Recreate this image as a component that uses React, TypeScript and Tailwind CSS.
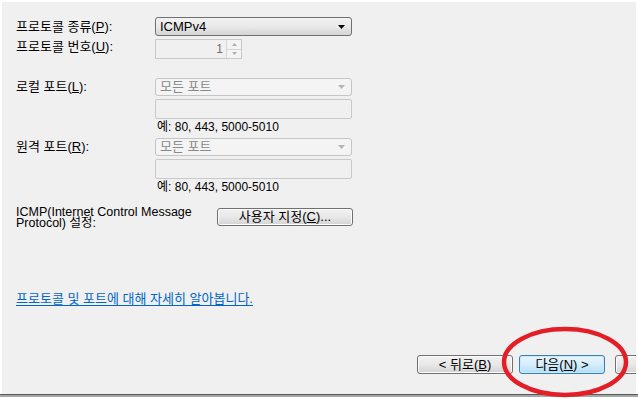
import React from 'react';

const Acc = ({ c }: { c: string }) => <span className="underline underline-offset-1">{c}</span>;

const Arrow = ({ disabled }: { disabled?: boolean }) => (
  <svg width="7" height="4" viewBox="0 0 7 4" className="shrink-0">
    <path d="M0 0h7L3.5 4z" fill={disabled ? '#b5b5b5' : '#000'} />
  </svg>
);

const Combo = ({ text, disabled, h }: { text: string; disabled?: boolean; h: string }) => (
  <div
    className={`w-[197px] ${h} flex items-center justify-between pl-[4px] pr-[6px] rounded-[3px] border ${
      disabled
        ? 'border-[#c5c5c5] bg-[#f4f4f4] text-[#8a8a8a] text-[13px]'
        : 'border-[#707070] bg-gradient-to-b from-[#f2f2f2] via-[#e9e9e9] to-[#d4d4d4] text-black text-[13px]'
    }`}
  >
    <span className="leading-[16px]">{text}</span>
    <Arrow disabled={disabled} />
  </div>
);

const TextBox = () => (
  <div className="w-[197px] h-[20px] mt-[3px] rounded-[2px] border border-[#c9c9c9] bg-[#f0f0f0]" />
);

const Example = () => (
  <div className="h-[19px] pl-[2px] pt-[1px] leading-[14px] text-[12px] text-black">예: 80, 443, 5000-5010</div>
);

const WinButton = ({
  children,
  w,
  h = 'h-[19px]',
  focused,
}: {
  children?: React.ReactNode;
  w: string;
  h?: string;
  focused?: boolean;
}) => (
  <div
    className={`${w} ${h} shrink-0 flex items-center justify-center rounded-[3px] border leading-[16px] ${
      focused
        ? 'border-[#3c7fb1] bg-gradient-to-b from-[#eaf6fd] via-[#d4eefc] to-[#b3ddf5] shadow-[inset_0_0_0_1px_#c8e9fb]'
        : 'border-[#707070] bg-gradient-to-b from-[#f2f2f2] via-[#e8e8e8] to-[#d3d3d3] shadow-[inset_0_0_0_1px_#fcfcfc]'
    }`}
  >
    {children}
  </div>
);

export default function App() {
  return (
    <div className="w-[638px] h-[399px] bg-white overflow-hidden relative font-['Liberation_Sans','Noto_Sans_CJK_KR',sans-serif] text-[13px] text-black">
      <div className="ml-[2px] mt-[2px] w-[634px] h-[392px] bg-[#f0f0f0] flex flex-col overflow-hidden">
        <div className="pl-[14px] pt-[15px] flex flex-col">
          {/* protocol type */}
          <div className="flex items-center h-[19px]">
            <div className="w-[139px] leading-[16px]">
              프로토콜 종류(<Acc c="P" />):
            </div>
            <Combo text="ICMPv4" h="h-[19px]" />
          </div>
          {/* protocol number */}
          <div className="flex items-start mt-[3px]">
            <div className="w-[139px] leading-[16px]">
              프로토콜 번호(<Acc c="U" />):
            </div>
            <div className="w-[87px] h-[20px] flex border border-[#c9c9c9] bg-[#f0f0f0]">
              <div className="flex-1 text-right pr-[3px] leading-[18px] text-[12px] text-[#6d6d6d]">1</div>
              <div className="w-[15px] flex flex-col border-l border-[#d6d6d6]">
                <div className="flex-1 flex items-center justify-center border-b border-[#d6d6d6] bg-[#f4f4f4]">
                  <svg width="5" height="3" viewBox="0 0 5 3">
                    <path d="M0 3h5L2.5 0z" fill="#b0b0b0" />
                  </svg>
                </div>
                <div className="flex-1 flex items-center justify-center bg-[#f4f4f4]">
                  <svg width="5" height="3" viewBox="0 0 5 3">
                    <path d="M0 0h5L2.5 3z" fill="#b0b0b0" />
                  </svg>
                </div>
              </div>
            </div>
          </div>

          {/* local port */}
          <div className="flex mt-[19px]">
            <div className="w-[139px] leading-[16px] pt-[1px]">
              로컬 포트(<Acc c="L" />):
            </div>
            <div className="flex flex-col">
              <Combo text="모든 포트" disabled h="h-[18px]" />
              <TextBox />
              <Example />
            </div>
          </div>

          {/* remote port */}
          <div className="flex">
            <div className="w-[139px] leading-[16px] pt-[1px]">
              원격 포트(<Acc c="R" />):
            </div>
            <div className="flex flex-col">
              <Combo text="모든 포트" disabled h="h-[18px]" />
              <TextBox />
              <Example />
            </div>
          </div>

          {/* icmp */}
          <div className="flex h-[20px] mt-[10px]">
            <div className="w-[201px] -mt-[1px] leading-[11px] text-[12.5px]">
              ICMP(Internet Control Message
              <br />
              Protocol) 설정:
            </div>
            <WinButton w="w-[136px]" h="h-[18px]">
              사용자 지정(<Acc c="C" />)...
            </WinButton>
          </div>

          <div className="mt-[63px] leading-[16px]">
            <span className="text-[#0066cc] underline underline-offset-2">
              프로토콜 및 포트에 대해 자세히 알아봅니다.
            </span>
          </div>
        </div>

        {/* wizard buttons */}
        <div className="mt-auto mb-[20px] pl-[415px] flex">
          <WinButton w="w-[96px]">
            &lt; 뒤로(<Acc c="B" />)
          </WinButton>
          <div className="ml-[6px]">
            <WinButton w="w-[86px]" focused>
              다음(<Acc c="N" />) &gt;
            </WinButton>
          </div>
          <div className="ml-[10px]">
            <WinButton w="w-[86px]" />
          </div>
        </div>
      </div>
      <div className="h-[1px] bg-[#5a5a5a]" />
      <div className="h-[2px] bg-[#a6a6a6]" />

      {/* red annotation ellipse */}
      <svg className="absolute left-0 top-0 pointer-events-none" width="638" height="399">
        <ellipse cx="565" cy="362" rx="61" ry="33" fill="none" stroke="#e41e26" strokeWidth="4.5" />
      </svg>
    </div>
  );
}
